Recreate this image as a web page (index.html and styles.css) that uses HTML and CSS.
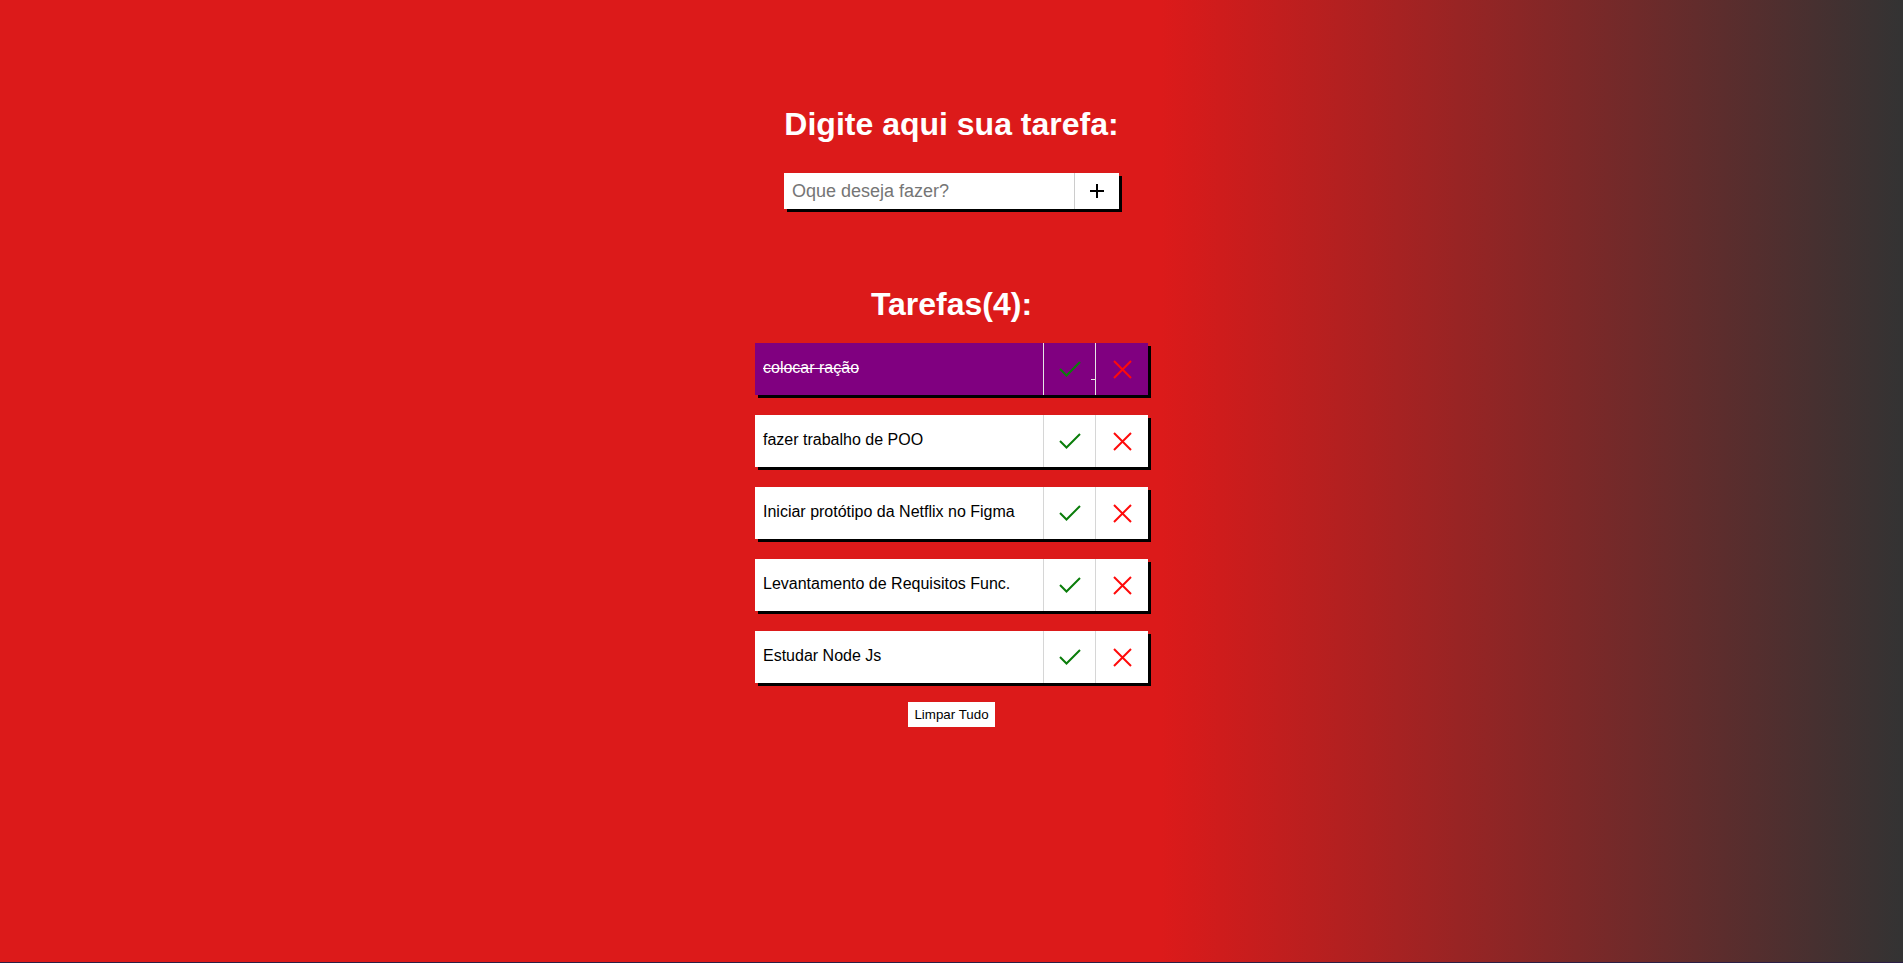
FILE: index.html
```html
<!DOCTYPE html>
<html lang="pt-BR">
<head>
<meta charset="utf-8">
<title>Tarefas</title>
<link rel="stylesheet" href="styles.css">
</head>
<body>
<main class="app">
  <h1 class="title">Digite aqui sua tarefa:</h1>
  <form class="new-task">
    <input class="new-task__input" type="text" placeholder="Oque deseja fazer?">
    <button class="new-task__add" type="button" aria-label="Adicionar">
      <svg width="14" height="14" viewBox="0 0 14 14"><path d="M7 0v14M0 7h14" stroke="#000" stroke-width="2" fill="none"/></svg>
    </button>
  </form>

  <h2 class="title title--list">Tarefas(4):</h2>
  <ul class="tasks">
    <li class="task task--done">
      <span class="task__text">colocar ração</span>
      <button class="task__btn task__btn--check" type="button" aria-label="Concluir">
        <svg width="22" height="16" viewBox="0 0 22 16"><polyline points="1,8 7.5,14.5 21,1" fill="none" stroke="#0a7d0a" stroke-width="2"/></svg>
      </button>
      <button class="task__btn" type="button" aria-label="Excluir">
        <svg width="19" height="19" viewBox="0 0 19 19"><path d="M1 1L18 18M18 1L1 18" stroke="#ff0a0a" stroke-width="2" fill="none"/></svg>
      </button>
    </li>
    <li class="task">
      <span class="task__text">fazer trabalho de POO</span>
      <button class="task__btn" type="button" aria-label="Concluir">
        <svg width="22" height="16" viewBox="0 0 22 16"><polyline points="1,8 7.5,14.5 21,1" fill="none" stroke="#0a7d0a" stroke-width="2"/></svg>
      </button>
      <button class="task__btn" type="button" aria-label="Excluir">
        <svg width="19" height="19" viewBox="0 0 19 19"><path d="M1 1L18 18M18 1L1 18" stroke="#ff0a0a" stroke-width="2" fill="none"/></svg>
      </button>
    </li>
    <li class="task">
      <span class="task__text">Iniciar protótipo da Netflix no Figma</span>
      <button class="task__btn" type="button" aria-label="Concluir">
        <svg width="22" height="16" viewBox="0 0 22 16"><polyline points="1,8 7.5,14.5 21,1" fill="none" stroke="#0a7d0a" stroke-width="2"/></svg>
      </button>
      <button class="task__btn" type="button" aria-label="Excluir">
        <svg width="19" height="19" viewBox="0 0 19 19"><path d="M1 1L18 18M18 1L1 18" stroke="#ff0a0a" stroke-width="2" fill="none"/></svg>
      </button>
    </li>
    <li class="task">
      <span class="task__text">Levantamento de Requisitos Func.</span>
      <button class="task__btn" type="button" aria-label="Concluir">
        <svg width="22" height="16" viewBox="0 0 22 16"><polyline points="1,8 7.5,14.5 21,1" fill="none" stroke="#0a7d0a" stroke-width="2"/></svg>
      </button>
      <button class="task__btn" type="button" aria-label="Excluir">
        <svg width="19" height="19" viewBox="0 0 19 19"><path d="M1 1L18 18M18 1L1 18" stroke="#ff0a0a" stroke-width="2" fill="none"/></svg>
      </button>
    </li>
    <li class="task">
      <span class="task__text">Estudar Node Js</span>
      <button class="task__btn" type="button" aria-label="Concluir">
        <svg width="22" height="16" viewBox="0 0 22 16"><polyline points="1,8 7.5,14.5 21,1" fill="none" stroke="#0a7d0a" stroke-width="2"/></svg>
      </button>
      <button class="task__btn" type="button" aria-label="Excluir">
        <svg width="19" height="19" viewBox="0 0 19 19"><path d="M1 1L18 18M18 1L1 18" stroke="#ff0a0a" stroke-width="2" fill="none"/></svg>
      </button>
    </li>
  </ul>
  <button class="clear" type="button">Limpar Tudo</button>
</main>
</body>
</html>
```

FILE: styles.css
```css
* {
  box-sizing: border-box;
}

html {
  background: #2b1f45;
}

body {
  margin: 0;
  min-height: calc(100vh - 1px);
  background: linear-gradient(to right, #dc1a1a 61%, #333333 100%);
  font-family: "Liberation Sans", Arial, sans-serif;
}

.app {
  display: flex;
  flex-direction: column;
  align-items: center;
  padding-top: 106px;
}

.title {
  margin: 0;
  color: #ffffff;
  font-size: 32px;
  font-weight: bold;
  line-height: 37px;
}

.title--list {
  margin-top: 77px;
}

.new-task {
  display: flex;
  margin-top: 30px;
  width: 335px;
  height: 36px;
  background: #ffffff;
  box-shadow: 3px 3px 0 #000000;
}

.new-task__input {
  width: 290px;
  height: 36px;
  border: none;
  outline: none;
  padding: 0 8px;
  font-family: "Liberation Sans", Arial, sans-serif;
  font-size: 18px;
  color: #000000;
  background: #ffffff;
}

.new-task__input::placeholder {
  color: #757575;
}

.new-task__add {
  width: 45px;
  height: 36px;
  border: none;
  border-left: 1px solid #cccccc;
  background: #ffffff;
  padding: 0;
  display: flex;
  align-items: center;
  justify-content: center;
}

.tasks {
  list-style: none;
  margin: 20px 0 0;
  padding: 0;
  display: flex;
  flex-direction: column;
  gap: 20px;
}

.task {
  display: grid;
  grid-template-columns: 1fr 52px 53px;
  width: 393px;
  height: 52px;
  background: #ffffff;
  box-shadow: 3px 3px 0 #000000;
}

.task__text {
  display: flex;
  align-items: center;
  padding: 0 0 3px 8px;
  font-size: 16px;
  color: #000000;
}

.task__btn {
  position: relative;
  border: none;
  border-left: 1px solid #d6d6d6;
  background: transparent;
  padding: 0;
  display: flex;
  align-items: center;
  justify-content: center;
}

.task--done {
  background: #800080;
}

.task--done .task__text {
  color: #ffffff;
  text-decoration: line-through;
}

.task--done .task__btn {
  border-left-color: #e6e6e6;
}

.task__btn--check::after {
  content: "";
  position: absolute;
  right: 0;
  bottom: 15px;
  width: 4px;
  height: 1px;
  background: #e6e6e6;
}

.clear {
  margin-top: 19px;
  height: 25px;
  padding: 0 6px;
  border: none;
  background: #ffffff;
  color: #000000;
  font-family: "Liberation Sans", Arial, sans-serif;
  font-size: 13.33px;
}
```
